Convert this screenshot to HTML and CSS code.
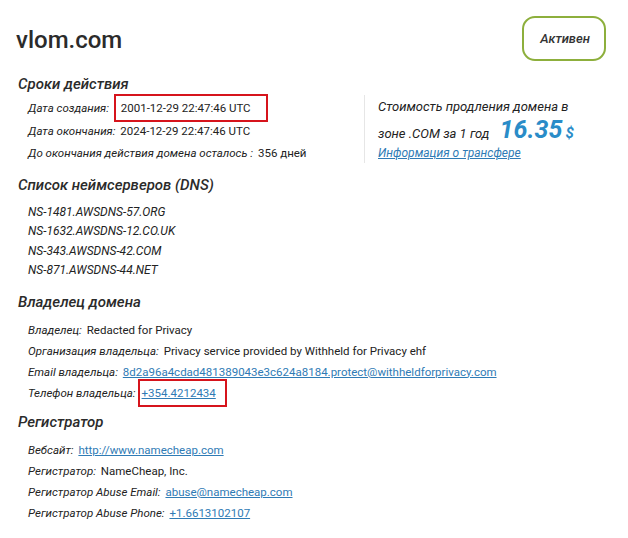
FILE: index.html
```html
<!DOCTYPE html>
<html lang="ru">
<head>
  <meta charset="UTF-8">
  <title>vlom.com — Whois</title>
  <link rel="stylesheet" href="styles.css">
</head>
<body>
  <div class="whois">
    <div class="cabecera">
      <h1>vlom.com</h1>
      <span class="estado">Активен</span>
    </div>

    <h3>Сроки действия</h3>
    <div class="fechas">
      <ul class="datos">
        <li><span class="etiqueta">Дата создания:</span> <span class="marcado">2001-12-29 22:47:46 UTC</span></li>
        <li><span class="etiqueta">Дата окончания:</span> 2024-12-29 22:47:46 UTC</li>
        <li><span class="etiqueta">До окончания действия домена осталось :</span> 356 дней</li>
      </ul>
      <div class="precio">
        <p>Стоимость продления домена в<br>зоне .COM за 1 год <span class="monto">16.35</span> <span class="moneda">$</span></p>
        <a href="#">Информация о трансфере</a>
      </div>
    </div>

    <h3>Список неймсерверов (DNS)</h3>
    <ul class="dns">
      <li>NS-1481.AWSDNS-57.ORG</li>
      <li>NS-1632.AWSDNS-12.CO.UK</li>
      <li>NS-343.AWSDNS-42.COM</li>
      <li>NS-871.AWSDNS-44.NET</li>
    </ul>

    <h3>Владелец домена</h3>
    <ul class="datos propietario">
      <li><span class="etiqueta">Владелец:</span> Redacted for Privacy</li>
      <li><span class="etiqueta">Организация владельца:</span> Privacy service provided by Withheld for Privacy ehf</li>
      <li><span class="etiqueta">Email владельца:</span> <a href="#">8d2a96a4cdad481389043e3c624a8184.protect@withheldforprivacy.com</a></li>
      <li><span class="etiqueta">Телефон владельца:</span><span class="marcado telefono"><a href="#">+354.4212434</a></span></li>
    </ul>

    <h3>Регистратор</h3>
    <ul class="datos">
      <li><span class="etiqueta">Вебсайт:</span> <a href="#">http://www.namecheap.com</a></li>
      <li><span class="etiqueta">Регистратор:</span> NameCheap, Inc.</li>
      <li><span class="etiqueta">Регистратор Abuse Email:</span> <a href="#">abuse@namecheap.com</a></li>
      <li><span class="etiqueta">Регистратор Abuse Phone:</span> <a href="#">+1.6613102107</a></li>
    </ul>
  </div>
</body>
</html>
```

FILE: styles.css
```css
body {
  margin: 0;
  background: #fff;
  font-family: Roboto, "Liberation Sans", sans-serif;
  color: #222;
}

.whois {
  padding: 16px 22px 0 18px;
}

.cabecera {
  display: flex;
  justify-content: space-between;
  align-items: center;
  padding-bottom: 14px;
}

h1 {
  margin: 2px 0 0 -2px;
  font-size: 24px;
  font-weight: 500;
  color: #2b2b2b;
}

.estado {
  border: 2px solid #8daf3c;
  border-radius: 13px;
  padding: 13px 14px 13px 16px;
  font-size: 13px;
  font-weight: 500;
  font-style: italic;
  color: #333;
}

h3 {
  margin: 0 0 9px;
  font-size: 15px;
  font-weight: 500;
  font-style: italic;
  color: #2b2b2b;
}

ul {
  list-style: none;
  margin: 0 0 12px;
  padding: 0 0 0 10px;
}

.datos li {
  font-size: 11.5px;
  line-height: 21px;
  white-space: nowrap;
}

.etiqueta {
  font-style: italic;
  margin-right: 2px;
}

.marcado {
  border: 2px solid #d6141c;
  padding: 5px 15px 5px 5px;
}

.telefono {
  padding: 5px 9px 5px 2px;
}

a {
  color: #2f7bb5;
}

.fechas {
  display: flex;
  margin-top: -5px;
}

.fechas .datos {
  width: 336px;
  margin-bottom: 11px;
}

.fechas .datos li {
  line-height: 22.5px;
}

.propietario {
  margin-bottom: 9px;
}

.precio {
  border-left: 1px solid #e6e6e6;
  margin-top: -2px;
  padding: 0 0 0 13px;
  height: 68px;
  font-style: italic;
  font-size: 13px;
}

.precio p {
  margin: 0;
  line-height: 23px;
}

.precio a {
  font-size: 12px;
}

.monto {
  font-size: 25px;
  font-weight: 700;
  color: #2a8cc8;
  margin-left: 7px;
}

.moneda {
  font-size: 15px;
  font-weight: 700;
  color: #2a8cc8;
}

.dns li {
  font-size: 12px;
  font-style: italic;
  line-height: 19.5px;
}
```
